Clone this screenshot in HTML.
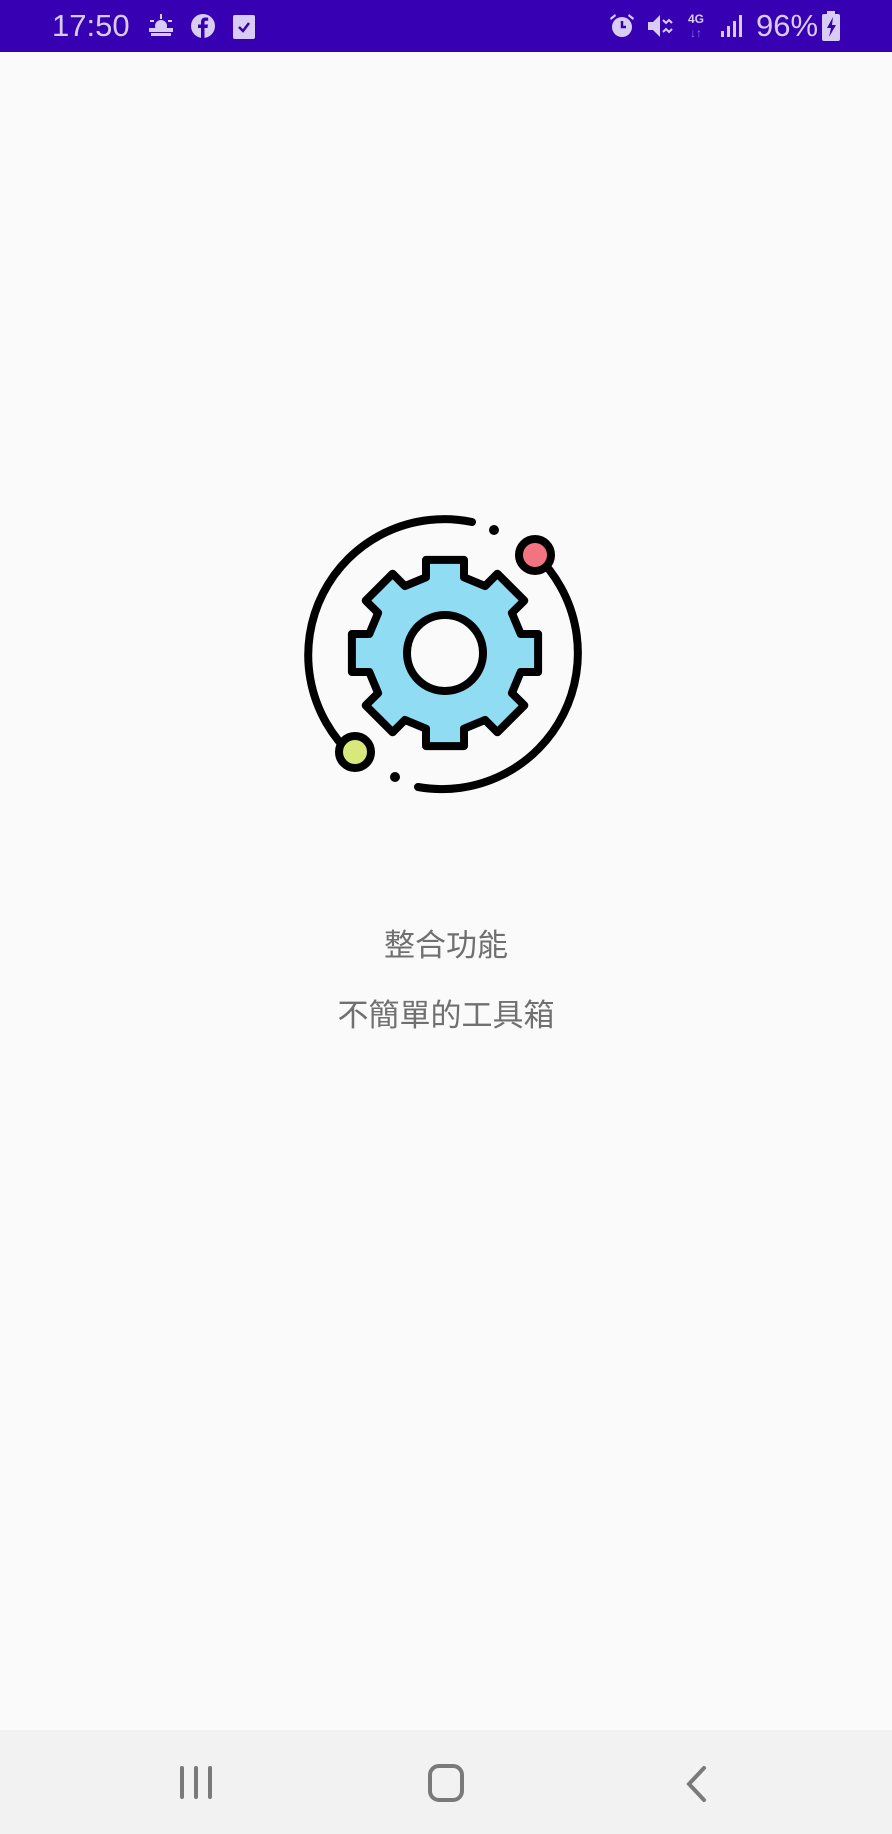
<!DOCTYPE html>
<html><head><meta charset="utf-8"><style>
html,body{margin:0;padding:0}
body{width:892px;height:1834px;background:#fafafa;position:relative;overflow:hidden;font-family:"Liberation Sans","Noto Sans CJK TC",sans-serif}
.sb{position:absolute;left:0;top:0;width:892px;height:52px;background:#3700b3;color:#d8ccf2}
.t{position:absolute;font-size:31px;top:8px}
.txt{position:absolute;left:0;width:892px;text-align:center;color:#707070;font-size:31px;line-height:36px}
.nav{position:absolute;left:0;top:1730px;width:892px;height:104px;background:#f2f2f2}
</style></head><body>
<div class="sb">
<span class="t" style="left:52px">17:50</span>
<svg style="position:absolute;left:146px;top:12px" width="30" height="28" viewBox="0 0 30 28" fill="#d8ccf2"><circle cx="15" cy="14" r="6"/><rect x="3" y="16" width="24" height="4"/><rect x="5" y="21" width="20" height="3"/><rect x="14" y="2" width="2" height="5"/><rect x="4" y="8" width="4" height="2"/><rect x="22" y="8" width="4" height="2"/></svg>
<svg style="position:absolute;left:190px;top:13px" width="26" height="26" viewBox="0 0 26 26"><circle cx="13" cy="13" r="12" fill="#d8ccf2"/><path d="M14.5 25V15h3l.5-3.5h-3.5V9.5c0-1 .4-1.7 1.8-1.7h1.9V4.7c-.4 0-1.5-.2-2.8-.2-2.7 0-4.4 1.6-4.4 4.6v2.4H8V15h3v10z" fill="#3700b3"/></svg>
<svg style="position:absolute;left:233px;top:13px" width="22" height="26" viewBox="0 0 22 26"><rect x="0" y="2" width="22" height="24" rx="2" fill="#d8ccf2"/><path d="M6 14l4 4 6-8" stroke="#3700b3" stroke-width="2.5" fill="none"/></svg>
<svg style="position:absolute;left:608px;top:12px" width="28" height="28" viewBox="0 0 28 28" fill="#d8ccf2"><circle cx="14" cy="15" r="10"/><path d="M2 6l5-4 1 2-5 4zM26 6l-5-4-1 2 5 4z"/><path d="M14 9v6h4" stroke="#3700b3" stroke-width="2.5" fill="none"/></svg>
<svg style="position:absolute;left:646px;top:12px" width="28" height="28" viewBox="0 0 28 28" fill="#d8ccf2"><path d="M2 10h5l7-7v22l-7-7H2z"/><path d="M17 8l3 3 3-3 3 3M17 20l3-3 3 3 3-3" stroke="#d8ccf2" stroke-width="2" fill="none"/></svg>
<span style="position:absolute;left:688px;top:12px;font-size:12px;font-weight:bold">4G</span>
<span style="position:absolute;left:690px;top:26px;font-size:12px;color:#8e78d8">↓↑</span>
<svg style="position:absolute;left:720px;top:14px" width="24" height="24" viewBox="0 0 24 24" fill="#d8ccf2"><rect x="1" y="17" width="3" height="6"/><rect x="7" y="12" width="3" height="11"/><rect x="13" y="7" width="3" height="16"/><rect x="19" y="1" width="3" height="22"/></svg>
<span class="t" style="left:756px">96%</span>
<svg style="position:absolute;left:822px;top:11px" width="18" height="30" viewBox="0 0 18 30"><rect x="5" y="0" width="8" height="3" fill="#d8ccf2"/><rect x="0" y="3" width="18" height="27" rx="2" fill="#d8ccf2"/><path d="M11 6l-6 11h4l-2 9 7-12h-4z" fill="#3700b3"/></svg>
</div>

<svg style="position:absolute;left:0;top:0" width="892" height="1834" viewBox="0 0 892 1834">
<g fill="none" stroke="#000" stroke-width="8" stroke-linecap="round">
<path d="M472 522 A136 136 0 0 0 353 756"/>
<path d="M418 787 A136 136 0 0 0 535 554"/>
</g>
<circle cx="494" cy="530" r="5" fill="#000"/>
<circle cx="395" cy="777" r="5" fill="#000"/>
<circle cx="535" cy="555" r="16" fill="#f27480" stroke="#000" stroke-width="8"/>
<circle cx="355" cy="752" r="16" fill="#d8e87a" stroke="#000" stroke-width="8"/>
<polygon id="gear" fill="#8fdcf3" stroke="#000" stroke-width="8" stroke-linejoin="round" points=""/>
<circle cx="445" cy="653" r="38" fill="#fafafa" stroke="#000" stroke-width="8"/>
</svg>
<script>
(function(){var cx=445,cy=653,pts=[],R=95,r=78,w=19;
function pt(ang,rad){pts.push((cx+rad*Math.cos(ang)).toFixed(1)+","+(cy+rad*Math.sin(ang)).toFixed(1));}
for(var i=0;i<8;i++){var a=i*Math.PI/4-Math.PI/2;var aw=Math.asin(w/r),aW=Math.asin(w/R);
pt(a-aw,r);pt(a-aW,R);pt(a+aW,R);pt(a+aw,r);}
document.getElementById('gear').setAttribute('points',pts.join(' '));})();
</script>

<div class="txt" style="top:928px">整合功能</div>
<div class="txt" style="top:998px">不簡單的工具箱</div>

<div class="nav">
<svg width="892" height="104" viewBox="0 0 892 104" style="position:absolute;left:0;top:0" fill="none" stroke="#7a7a7a" stroke-width="4" stroke-linecap="round">
<path d="M182 38v29M196 38v29M210 38v29"/>
<rect x="430" y="36" width="32" height="34" rx="9"/>
<path d="M704 38l-15 16 15 16"/>
</svg>
</div>
</body></html>
